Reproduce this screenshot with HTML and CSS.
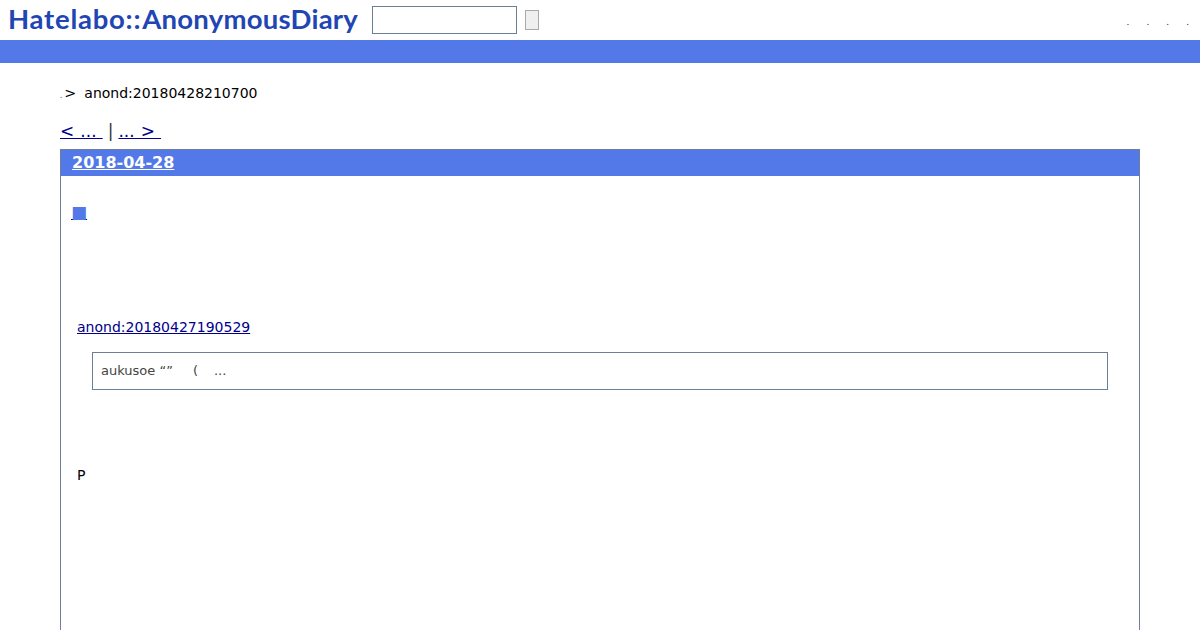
FILE: index.html
```html
<!DOCTYPE html>
<html lang="ja">
<head>
<meta charset="utf-8">
<title>anond:20180428210700</title>
<link rel="stylesheet" href="styles.css">
</head>
<body>
<header class="top">
  <a class="logo">Hatelabo::<span class="logo-rest">AnonymousDiary</span></a>
  <form class="search">
    <input class="search-input" type="text">
    <button class="search-btn" type="button"></button>
  </form>
  <nav class="top-links"><span>.</span><span>.</span><span>.</span><span>.</span></nav>
</header>
<div class="bar"></div>
<main class="main">
  <p class="crumb"><span class="dot">.</span><span class="gt">&gt;</span><span class="crumb-id">anond:20180428210700</span></p>
  <p class="pager"><a href="#">&lt; ... </a><span class="sep">|</span><a href="#">... &gt; </a></p>
  <section class="day">
    <h2 class="day-title"><a href="#">2018-04-28</a></h2>
    <div class="day-body">
      <h3 class="entry-head"><a href="#"><span class="sq">■</span></a></h3>
      <p class="ref"><a href="#">anond:20180427190529</a></p>
      <blockquote class="quote">aukusoe “”<span class="q1">(</span><span class="q2">...</span></blockquote>
      <p class="para">P</p>
    </div>
  </section>
</main>
</body>
</html>
```
FILE: styles.css
```css
html, body { margin: 0; height: 630px; overflow: hidden; background: #fff; }
body { font-family: "DejaVu Sans", sans-serif; font-size: 14px; color: #000; }
a { color: #00008b; text-decoration: underline; }
p { margin: 0; }

.top { height: 40px; display: flex; align-items: center; padding-left: 8px; }
.logo { font-family: "Lato", sans-serif; font-weight: 700; font-size: 27.5px; letter-spacing: 0.75px; line-height: 38px; height: 40px; color: #2146b4; text-decoration: none; width: 364px; white-space: nowrap; }
.logo-rest { margin-left: 1px; letter-spacing: 0.24px; }
.search { display: flex; align-items: center; gap: 8px; }
.search-input { box-sizing: border-box; width: 145px; height: 28px; margin: 0; padding: 0; border: 1px solid #6b7f99; background: #fff; }
.search-btn { box-sizing: border-box; width: 14px; height: 20px; padding: 0; border: 1px solid #a9a9a9; background: #efefef; }
.top-links { margin-left: auto; display: flex; gap: 17px; padding-right: 11px; font-size: 9px; color: #222; padding-top: 4px; }

.bar { height: 23px; background: #5279e7; }

.main { padding: 0 60px; }
.crumb { display: flex; align-items: baseline; height: 17px; margin-top: 22px; }
.dot { font-size: 7px; }
.gt { margin-left: 2px; font-size: 14.4px; }
.crumb-id { margin-left: 8px; }
.pager { height: 18px; margin-top: 20px; font-size: 17px; line-height: 18px; word-spacing: 0.7px; display: flex; align-items: baseline; white-space: pre; }
.sep { margin: 0 5px; color: #333; }

.day { margin-top: 9px; border: 1px solid #6b7f99; border-bottom: 0; height: 500px; box-sizing: border-box; }
.day-title { margin: 0; height: 26px; line-height: 26px; padding-left: 11px; background: #5279e7; font-size: 16px; font-weight: 700; }
.day-title a { color: #fff; }
.day-body { padding: 0 31px 0 10px; }
.entry-head { margin: 26px 0 0; height: 20px; font-size: 17px; line-height: 20px; font-weight: 400; }
.sq { color: #5279e7; }
.ref { margin: 97px 0 0 6px; height: 17px; line-height: 17px; }
.quote { box-sizing: border-box; margin: 16px 0 0 21px; height: 38px; padding: 0 8px; line-height: 36px; border: 1px solid #6b7f99; font-size: 13px; color: #444; width: 1016px; }
.q1 { margin-left: 20px; }
.q2 { margin-left: 16px; }
.para { margin: 77px 0 0 6px; height: 17px; line-height: 17px; }
```
